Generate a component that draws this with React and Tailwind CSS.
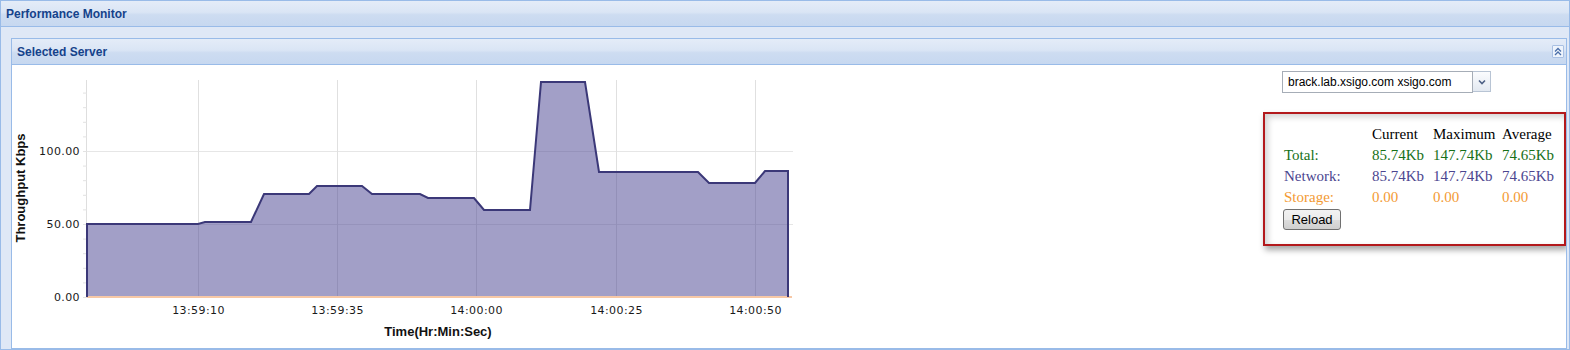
export default function App() {
  const pts = [[87,224],[198,224],[205,222],[251,222],[264,194],[309,194],[317,186],[362,186],[372,194],[420,194],[428,198],[474,198],[484,210],[530,210],[541,82],[585,82],[599,172],[698,172],[709,183],[755,183],[765,171],[788,171]];
  const line = "M87,297 L" + pts.map((p) => p.join(",")).join(" L") + " L788,297";
  const area = line + " Z";
  const vGrid = [198, 337, 476, 616, 755];
  const vLabels = ["13:59:10", "13:59:35", "14:00:00", "14:00:25", "14:00:50"];
  const ticks = [];
  for (let i = 0; i <= 14; i++) ticks.push(297 - i * 14.6);

  const headerBg = "bg-[linear-gradient(to_bottom,#e4ecf8_0%,#dae5f5_45%,#cddcf1_55%,#c7d8f0_100%)]";

  return (
    <div className="w-[1570px] h-[350px] bg-white overflow-hidden font-['Liberation_Sans',Arial,sans-serif]">
      <div className="h-[350px] border border-[#99bbe8] bg-[#dfe8f6] flex flex-col">
        <div className={`h-[26px] shrink-0 border-b border-[#99bbe8] ${headerBg} flex items-center px-[5px]`}>
          <span className="text-[12px] font-bold text-[#15428b]">Performance Monitor</span>
        </div>
        <div className="flex-1 min-h-0 pl-[10px] pr-[2px] pt-[11px] flex flex-col">
          <div className="flex-1 min-h-0 border border-[#99bbe8] flex flex-col">
            <div className={`h-[26px] shrink-0 border-b border-[#99bbe8] ${headerBg} flex items-center justify-between pl-[5px] pr-[2px]`}>
              <span className="text-[12px] font-bold text-[#15428b]">Selected Server</span>
              <div className="w-[12px] h-[13px] border border-[#a9c0e3] bg-[#eef4fc] rounded-[1px] flex items-center justify-center">
                <svg width="8" height="9" viewBox="0 0 8 9">
                  <polyline points="1,4.5 4,1.5 7,4.5" fill="none" stroke="#4a6ea9" strokeWidth="1.3" />
                  <polyline points="1,8 4,5 7,8" fill="none" stroke="#4a6ea9" strokeWidth="1.3" />
                </svg>
              </div>
            </div>
            <div className="flex-1 min-h-0 bg-white flex items-start overflow-hidden">
              <svg width="800" height="282" viewBox="12 65 800 282" className="shrink-0">
                <line x1="86.5" y1="80" x2="86.5" y2="297" stroke="#dedede" strokeWidth="1" />
                {ticks.map((y, i) => (
                  <line key={i} x1="83" y1={y + 0.5} x2="87" y2={y + 0.5} stroke="#e2e2e2" strokeWidth="1" />
                ))}
                <line x1="87" y1="151.5" x2="793" y2="151.5" stroke="#e6e6e6" strokeWidth="1" />
                <line x1="87" y1="224.5" x2="793" y2="224.5" stroke="#e6e6e6" strokeWidth="1" />
                {vGrid.map((x) => (
                  <line key={x} x1={x + 0.5} y1="80" x2={x + 0.5} y2="298" stroke="#e0e0e0" strokeWidth="1" />
                ))}
                <path d={area} fill="#463f8f" fillOpacity="0.5" />
                <line x1="87" y1="297" x2="792" y2="297" stroke="#f7c8a6" strokeWidth="2" />
                <path d={line} fill="none" stroke="#3b3878" strokeWidth="2" strokeLinejoin="miter" />
                <g fontFamily="'DejaVu Sans', Verdana, sans-serif" fontSize="11" fill="#1a1a1a" letterSpacing="0.4">
                  <text x="80" y="301" textAnchor="end">0.00</text>
                  <text x="80" y="228" textAnchor="end">50.00</text>
                  <text x="80" y="155" textAnchor="end">100.00</text>
                  {vLabels.map((t, i) => (
                    <text key={t} x={vGrid[i] + 0.5} y="314" textAnchor="middle">{t}</text>
                  ))}
                </g>
                <text x="438" y="336" textAnchor="middle" fontFamily="'Liberation Sans', Arial, sans-serif" fontWeight="bold" fontSize="13" fill="#111">Time(Hr:Min:Sec)</text>
                <text
                  x="0"
                  y="0"
                  transform="translate(25,188) rotate(-90)"
                  textAnchor="middle"
                  fontFamily="'Liberation Sans', Arial, sans-serif"
                  fontWeight="bold"
                  fontSize="13"
                  fill="#111"
                >
                  Throughput Kbps
                </text>
              </svg>
              <div className="flex-1" />
              <div className="w-[303px] shrink-0 flex flex-col">
                <div className="mt-[6px] ml-[19px] flex items-start">
                  <div className="w-[191px] h-[22px] border border-[#a6adb7] bg-white flex items-center pl-[5px] text-[12px] text-black leading-none">
                    brack.lab.xsigo.com xsigo.com
                  </div>
                  <div className="w-[18px] h-[21px] border border-[#b8c4d4] border-l-0 bg-[linear-gradient(to_bottom,#fbfcfe,#e3e9f1)] flex items-center justify-center">
                    <svg width="8" height="6" viewBox="0 0 8 6">
                      <polyline points="1,1.5 4,4.5 7,1.5" fill="none" stroke="#4d6185" strokeWidth="1.6" />
                    </svg>
                  </div>
                </div>
                <div className="mt-[19px] h-[134px] border-2 border-[#b3191c] shadow-[inset_3px_3px_6px_rgba(0,0,0,0.18),2px_4px_6px_rgba(0,0,0,0.35)] pt-[10px] pl-[19px] font-['Liberation_Serif','Times_New_Roman',serif] text-[15px]">
                  <div className="grid grid-cols-[88px_61px_69px_auto] auto-rows-[21px] items-center leading-[21px] whitespace-nowrap">
                    <div></div>
                    <div className="text-black">Current</div>
                    <div className="text-black">Maximum</div>
                    <div className="text-black">Average</div>
                    <div className="text-[#177017]">Total:</div>
                    <div className="text-[#177017]">85.74Kb</div>
                    <div className="text-[#177017]">147.74Kb</div>
                    <div className="text-[#177017]">74.65Kb</div>
                    <div className="text-[#4b458f]">Network:</div>
                    <div className="text-[#4b458f]">85.74Kb</div>
                    <div className="text-[#4b458f]">147.74Kb</div>
                    <div className="text-[#4b458f]">74.65Kb</div>
                    <div className="text-[#f39a33]">Storage:</div>
                    <div className="text-[#f39a33]">0.00</div>
                    <div className="text-[#f39a33]">0.00</div>
                    <div className="text-[#f39a33]">0.00</div>
                  </div>
                  <button className="mt-[1px] -ml-[1px] w-[58px] h-[21px] border border-[#707070] rounded-[3px] bg-[linear-gradient(to_bottom,#f2f2f2_0%,#ebebeb_50%,#dddddd_51%,#cfcfcf_100%)] font-['Liberation_Sans',Arial,sans-serif] text-[13px] text-black leading-none flex items-center justify-center">
                    Reload
                  </button>
                </div>
              </div>
            </div>
          </div>
        </div>
      </div>
    </div>
  );
}
